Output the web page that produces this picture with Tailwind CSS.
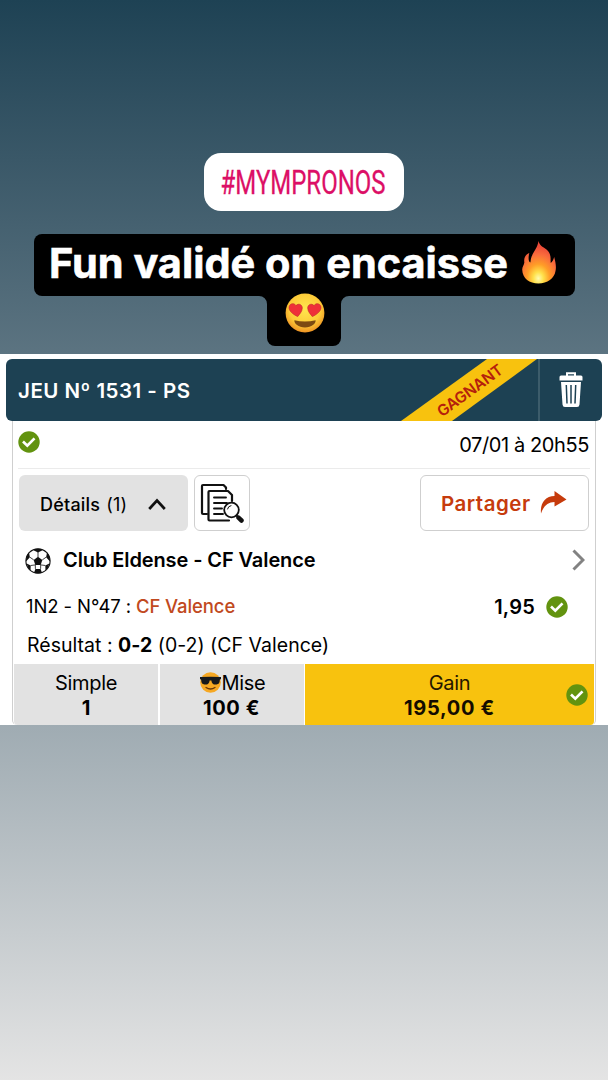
<!DOCTYPE html>
<html lang="fr">
<head>
<meta charset="utf-8">
<meta name="viewport" content="width=device-width, initial-scale=1">
<title>#MYMPRONOS</title>
<script src="https://cdn.jsdelivr.net/npm/@tailwindcss/browser@4"></script>
</head>
<body class="h-[1080px] w-[608px] overflow-hidden bg-linear-to-b from-[#1e4254] to-[#e4e4e4] font-['Inter','Liberation_Sans',sans-serif] text-black">
<svg class="hidden">
  <symbol id="check" viewBox="0 0 22 22"><circle cx="11" cy="11" r="10.7" fill="#62930f"/><path d="M5 10.6l4.3 4.1 7.2-7.3" fill="none" stroke="#fff" stroke-width="2.7"/></symbol>
</svg>
<main class="flex h-full flex-col">
  <section class="flex h-[354px] shrink-0 flex-col items-center pt-[153px]">
    <div class="flex h-[58px] w-[200px] items-center justify-center rounded-[17px] bg-white">
      <svg class="h-[58px] w-[200px] overflow-visible" viewBox="0 0 200 58"><text x="16.500" y="41" font-family="Roboto" font-size="34" textLength="165" lengthAdjust="spacingAndGlyphs" fill="#dc0f66" stroke="#dc0f66" stroke-width=".3">#MYMPRONOS</text></svg>
    </div>
    <h1 class="mt-[23px] flex h-[62px] w-[541px] items-start rounded-[8px] bg-black pt-[9px] pl-[16px] text-white">
      <svg class="h-[48px] w-[460px] overflow-visible" viewBox="0 0 460 48"><text x="-1" y="34.500" font-family="Inter" font-weight="700" font-size="41.500" textLength="459" lengthAdjust="spacingAndGlyphs" fill="#fff" stroke="#fff" stroke-width=".6">Fun validé on encaisse</text></svg>
      <svg class="-mt-[2px] ml-[11px] h-[44px] w-[38px]" viewBox="0 0 38 44">
        <defs><radialGradient id="fire" cx=".48" cy=".88" r=".75"><stop offset="0" stop-color="#fffbb0"/><stop offset=".2" stop-color="#ffe04a"/><stop offset=".45" stop-color="#ff9d27"/><stop offset=".75" stop-color="#f96c3c"/><stop offset="1" stop-color="#ec4b38"/></radialGradient></defs>
        <path d="M17.5 0C16.8 6 13 10 10.7 15.3 9.4 18.3 9.800 21 9.300 21.600 7.500 20.800 7 17 8.300 12 5 13 2.600 16.500 3.300 21 3.600 23.500 1.200 25 1.200 28.500 1.500 37.500 8.500 42.500 17.400 42.500 26.400 42.500 33.400 37.500 34.500 30 35.500 25.400 34.500 21.400 33.200 16 32.300 19 31.400 21 29.700 22 29.400 17.600 30.400 14.400 27 10 23.300 5.800 19 6.200 17.500 0Z" fill="url(#fire)"/>
      </svg>
    </h1>
    <div class="relative flex h-[50px] w-[74px] justify-center rounded-b-[8px] bg-black">
      <svg class="absolute top-0 -left-[8px] size-[8px]" viewBox="0 0 8 8"><path d="M0 0H8V8A8 8 0 0 0 0 0Z"/></svg>
      <svg class="absolute top-0 -right-[8px] size-[8px]" viewBox="0 0 8 8"><path d="M0 0H8A8 8 0 0 0 0 8Z"/></svg>
      <svg class="relative -top-[3px] ml-[2px] size-[40px]" viewBox="0 0 40 40">
        <defs><radialGradient id="face" cx=".5" cy=".4" r=".62"><stop offset="0" stop-color="#ffe64e"/><stop offset=".65" stop-color="#fdcb38"/><stop offset="1" stop-color="#ec8d22"/></radialGradient></defs>
        <circle cx="20" cy="20" r="19.4" fill="url(#face)"/>
        <path d="M12.7 23.6C8 21.3 3.4 18 4.1 13.8 4.8 10.3 9 9.5 11 12.6 13.5 9.8 17.3 11.6 17.3 15 17.2 18.5 14.7 21 12.7 23.6Z" fill="#ef3039" stroke="#bd2828" stroke-width=".6"/>
        <path d="M27.3 23.6C32 21.3 36.6 18 35.9 13.8 35.2 10.3 31 9.5 29 12.6 26.5 9.8 22.7 11.6 22.7 15 22.8 18.5 25.3 21 27.3 23.6Z" fill="#ef3039" stroke="#bd2828" stroke-width=".6"/>
        <path d="M9.400 27.200c6.800 1.700 14.400 1.700 21.200 0 .5 3.200-4.100 7.200-10.600 7.200S8.900 30.400 9.400 27.200Z" fill="#7c4a12"/>
      </svg>
    </div>
  </section>

  <section class="flex h-[371px] shrink-0 flex-col bg-white px-[6px] pt-[5px]">
    <header class="relative flex h-[62px] shrink-0 overflow-hidden rounded-[6px] bg-[#1d4153] text-white">
      <div class="flex w-[532px] items-center pt-[2px] pl-[12px] text-[20.5px] font-semibold tracking-[.5px]">JEU Nº 1531 - PS</div>
      <svg class="absolute top-0 left-[390px] h-[62px] w-[150px]" viewBox="0 0 150 62"><path d="M5 62L91 0H141L56 62Z" fill="#f8c20e"/><text transform="translate(46 58.500) rotate(-36)" font-family="Inter" font-size="15.500" font-weight="600" textLength="77" fill="#b5200c">GAGNANT</text></svg>
      <div class="flex flex-1 items-center justify-center border-l-2 border-[#3c5c6b]">
        <svg class="h-[36px] w-[24px]" viewBox="0 0 24 36"><path d="M8 4V1.300h8V4" fill="none" stroke="#fff" stroke-width="2"/><path d="M2 3.500h20q1.500 0 1.500 1.500v3.500H.500V5Q.500 3.500 2 3.500ZM2 10h20l-1.500 22.500q-.200 2.500-2.500 2.500H6q-2.300 0-2.500-2.500Z" fill="#fff"/><path d="M7.300 13l.700 18.500M12 13v18.500M16.700 13L16 31.500" stroke="#1d4153" stroke-width="1.500"/></svg>
      </div>
    </header>
    <article class="mx-[6px] flex flex-1 flex-col rounded-b-[5px] border-x-[1.500px] border-[#cfcfcf]">
      <div class="mx-[5px] flex h-[48px] items-center justify-between border-b-[1.500px] border-[#ebebeb] pr-[1px]">
        <svg class="-mt-[5px] size-[22px]"><use href="#check"/></svg>
        <time class="text-[20px] tracking-[-.4px]">07/01 à 20h55</time>
      </div>
      <div class="mx-[6px] mt-[6px] flex h-[56px]">
        <button class="flex w-[169px] items-center rounded-[6px] bg-[#e2e2e2] pt-[2px] pl-[21px] text-[18px]"><span class="font-medium tracking-[.2px]">Détails</span><span class="ml-[6px] tracking-[.2px]">(1)</span>
          <svg class="ml-[21px] h-[12px] w-[18px]" viewBox="0 0 18 12"><path d="M1.200 11L9 2.500l7.800 8.500" fill="none" stroke="#111" stroke-width="2.700"/></svg></button>
        <button class="ml-[6px] flex w-[56px] items-center justify-center rounded-[6px] border-[1.500px] border-[#cfcfcf]">
          <svg class="h-[40px] w-[44px]" viewBox="0 0 44 40" fill="none" stroke="#111" stroke-width="2.200" stroke-linejoin="round" stroke-linecap="round">
            <path d="M7 31H3Q2 31 2 30V3Q2 2 3 2H23.500L26 4.500V6"/><path d="M29 37.500H9.500Q8.500 37.500 8.500 36.500V9Q8.500 8 9.500 8H28L32 12V18"/>
            <path d="M14 14.500H26M14 20H27M14 25.500H22M14 31H23" stroke-width="1.900"/><circle cx="31.500" cy="27" r="7.300" fill="#fff" stroke-width="1.800"/><path d="M27.500 26q.7-3 3.500-3.400" stroke-width="1"/><path d="M36.500 32.500l2 2" /><path d="M38.500 34.700l3 2.800" stroke-width="4.500"/></svg>
        </button>
        <button class="ml-auto flex w-[169px] items-center rounded-[6px] border-[1.500px] border-[#cfcfcf] pt-[2px] pl-[20px] text-[20.500px] font-semibold tracking-[.500px] text-[#c63b0c]">Partager
          <svg class="-mt-[4px] ml-[9px] h-[24px] w-[27px] shrink-0" viewBox="0 0 27 24"><path d="M1 23.500C0 13.500 5 6 14.500 6V1L26.500 9.500 14.500 16.500V12C8 12 3.500 16 1 23.500Z" fill="#c63b0c"/></svg></button>
      </div>
      <div class="flex h-[58px] items-center pr-[10px] pl-[12px]">
        <svg class="mt-[1px] size-[26px]" viewBox="0 0 26 26"><circle cx="13" cy="13" r="12.100" fill="#fff" stroke="#111" stroke-width="1.100"/><path d="M13 8.800l4.300 3.100-1.600 5h-5.400l-1.600-5ZM8 2L13 4.600l5-2.600Q13-.6 8 2ZM1 13.500l3.900-4.300-1-4.900Q.5 8.500 1 13.500ZM25 13.500l-3.900-4.300 1-4.900Q25.500 8.500 25 13.500ZM5.500 22.500l.2-5L1.700 15.400Q2.500 20 5.500 22.500ZM20.500 22.500l-.2-5 4-2.100Q23.500 20 20.500 22.500ZM9 24.700L10.400 20.900h5.200l1.400 3.800Q13 25.900 9 24.700Z" fill="#111"/><path d="M13 4v5M4.900 9.200l3.800 2.700M21.100 9.200l-3.800 2.700M5.700 17.500l4.600-.6M20.300 17.500l-4.600-.6M10.400 20.900l-.1-4M15.600 20.900l.1-4" stroke="#111" stroke-width=".8"/></svg>
        <h2 class="ml-[12px] text-[20px] font-semibold tracking-[-.1px]">Club Eldense - CF Valence</h2>
        <svg class="ml-auto h-[22px] w-[13px]" viewBox="0 0 13 22"><path d="M1.500 1.500L11 11l-9.500 9.500" fill="none" stroke="#828282" stroke-width="3"/></svg>
      </div>
      <div class="flex h-[34px] items-center pt-[1px] pr-[27px] pl-[13px] text-[18.500px]"><span class="tracking-[-.1px]">1N2 - N°47 :</span><span class="ml-[5px] font-medium tracking-[-.1px] text-[#c14920]">CF Valence</span><strong class="ml-auto text-[20px] font-semibold tracking-[.2px]">1,95</strong><svg class="ml-[11px] size-[22px]"><use href="#check"/></svg></div>
      <p class="flex h-[41px] items-center pt-[5px] pl-[14px] text-[19.500px] tracking-[.02px] whitespace-pre">Résultat : <b class="font-bold">0-2</b> (0-2) (CF Valence)</p>
      <footer class="mx-[1px] grid flex-1 grid-cols-[144px_144px_1fr] gap-[1.500px] overflow-hidden rounded-b-[4px] text-center text-[20px] leading-[25px]">
        <div class="bg-[#e2e2e2] pt-[7px]"><p class="tracking-[-.3px]">Simple</p><b>1</b></div>
        <div class="bg-[#e2e2e2] pt-[7px]"><p class="flex items-center justify-center tracking-[-.3px]"><svg class="-mt-[2px] ml-[2px] size-[21px]" viewBox="0 0 21 21"><circle cx="10.500" cy="10.500" r="10.300" fill="#f6a823"/><path d="M0 5q10.500-.7 21 0v2l-1.200.8c0 4-2 4.800-4 4.800-3 0-4.200-1.800-4.400-4.200h-1.800C9.400 10.800 8.200 12.600 5.200 12.600c-2 0-4-.8-4-4.800L0 7Z" fill="#17191b"/><path d="M6 15.500q4.500 3 9 0" fill="none" stroke="#693708" stroke-width="1.300" stroke-linecap="round"/></svg><span class="ml-[1px]">Mise</span></p><b class="tracking-[.6px]">100 €</b></div>
        <div class="relative bg-[#f8c20e] pt-[7px] text-[#251600]"><p class="tracking-[-.3px]">Gain</p><b class="tracking-[.7px] text-[#140c00]">195,00 €</b><svg class="absolute top-[20px] right-[6px] size-[22px]"><use href="#check"/></svg></div>
      </footer>
    </article>
  </section>
</main>
</body>
</html>
